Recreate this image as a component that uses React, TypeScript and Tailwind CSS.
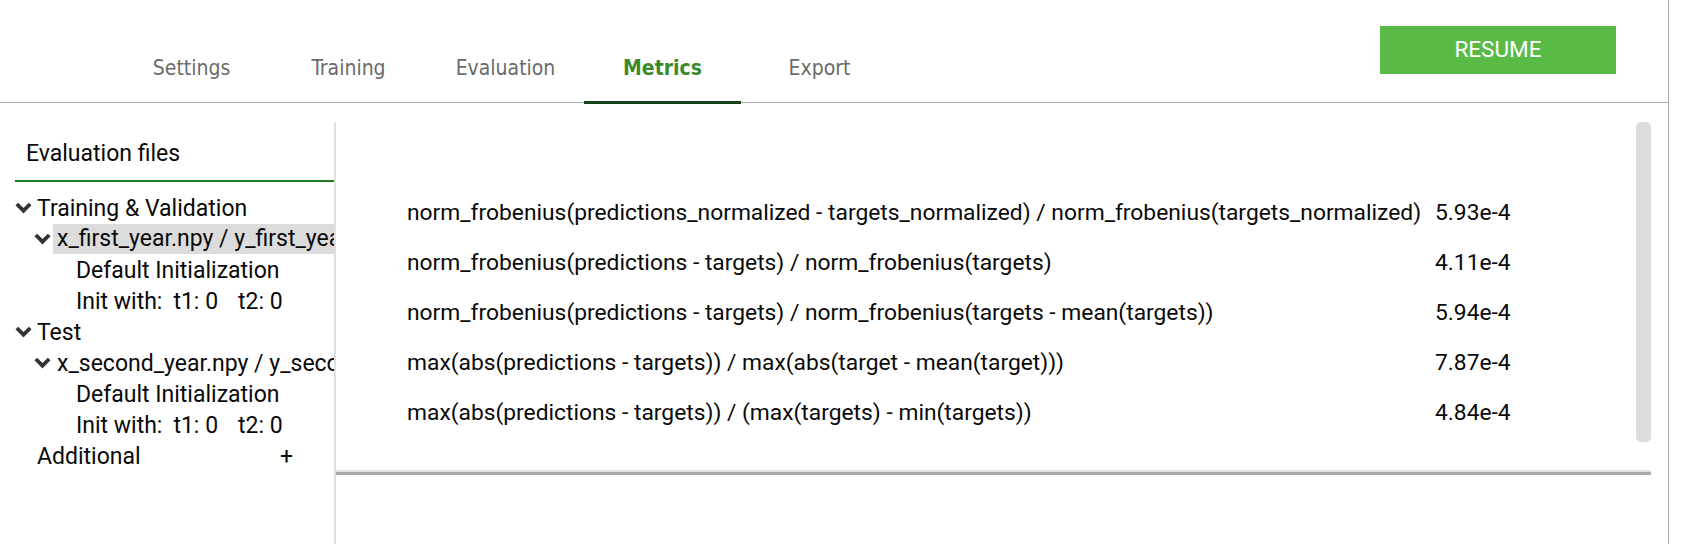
import React from "react";

const Chevron = () => (
  <svg width="17" height="12" viewBox="0 0 17 12" className="shrink-0">
    <polyline points="1.8,2 8.5,8.7 15.2,2" fill="none" stroke="#333333" strokeWidth="3.8" strokeLinecap="butt" strokeLinejoin="miter" />
  </svg>
);

const tabs = ["Settings", "Training", "Evaluation", "Metrics", "Export"];

const metrics: [string, string][] = [
  ["norm_frobenius(predictions_normalized - targets_normalized) / norm_frobenius(targets_normalized)", "5.93e-4"],
  ["norm_frobenius(predictions - targets) / norm_frobenius(targets)", "4.11e-4"],
  ["norm_frobenius(predictions - targets) / norm_frobenius(targets - mean(targets))", "5.94e-4"],
  ["max(abs(predictions - targets)) / max(abs(target - mean(target)))", "7.87e-4"],
  ["max(abs(predictions - targets)) / (max(targets) - min(targets))", "4.84e-4"],
];

const roboto = { fontFamily: "Roboto, 'Liberation Sans', sans-serif" };

function InitRow() {
  return (
    <div className="h-[31px] leading-[31px] pl-[76px] whitespace-nowrap">
      <span>Init with:</span>
      <span className="ml-[11px]">t1: 0</span>
      <span className="ml-[20px]">t2: 0</span>
    </div>
  );
}

export default function App() {
  return (
    <div className="w-[1684px] h-[544px] bg-white overflow-hidden flex text-[#0a0a0a]" style={roboto}>
      <div className="w-[1669px] h-full border-r border-[#aaaaaa] flex flex-col">
        {/* Header */}
        <div className="h-[103px] shrink-0 border-b border-[#aaaaaa] flex">
          <div className="flex pl-[113px] h-full" style={{ fontFamily: "'DejaVu Sans Condensed', 'DejaVu Sans', sans-serif" }}>
            {tabs.map((t) => (
              <div key={t} className="relative w-[157px] h-full flex justify-center pt-[57px]">
                <span
                  className={
                    t === "Metrics"
                      ? "text-[21px] leading-[23px] font-bold text-[#3a8a2c]"
                      : "text-[21px] leading-[23px] text-[#6a6a6a]"
                  }
                >
                  {t}
                </span>
                {t === "Metrics" && (
                  <div className="absolute left-0 right-0 bottom-[-2px] h-[3px] bg-[#17451a]" />
                )}
              </div>
            ))}
          </div>
          <div className="ml-auto mr-[52px] mt-[26px] w-[236px] h-[48px] bg-[#59bb46] text-white flex items-center justify-center text-[22.5px]">
            RESUME
          </div>
        </div>

        {/* Body */}
        <div className="flex-1 flex pt-[19px] min-h-0">
          {/* Left panel */}
          <div className="w-[336px] shrink-0 border-r-2 border-[#e0e0e0] text-[23px] overflow-hidden">
            <div className="ml-[15px] pl-[11px] pt-[16px] pb-[11px] border-b-2 border-[#1e7d24] leading-[31px]">
              Evaluation files
            </div>
            <div className="mt-[10.5px] whitespace-nowrap">
              <div className="h-[31px] leading-[31px] flex items-center pl-[15px]">
                <Chevron />
                <span className="ml-[5px]">Training &amp; Validation</span>
              </div>
              <div className="h-[31px] leading-[31px] flex items-center pl-[34px]">
                <Chevron />
                <span className="ml-[2px] pl-[4px] bg-[#dcdcdc] h-[30px] leading-[30px] flex-1">x_first_year.npy / y_first_year.npy</span>
              </div>
              <div className="h-[31px] leading-[31px] pl-[76px]">Default Initialization</div>
              <InitRow />
              <div className="h-[31px] leading-[31px] flex items-center pl-[15px]">
                <Chevron />
                <span className="ml-[5px]">Test</span>
              </div>
              <div className="h-[31px] leading-[31px] flex items-center pl-[34px]">
                <Chevron />
                <span className="ml-[6px]">x_second_year.npy / y_second_year.npy</span>
              </div>
              <div className="h-[31px] leading-[31px] pl-[76px]">Default Initialization</div>
              <InitRow />
              <div className="h-[31px] leading-[31px] pl-[37px] flex">
                <span className="w-[243px]">Additional</span>
                <span>+</span>
              </div>
            </div>
          </div>

          {/* Right panel */}
          <div className="w-[1315px] shrink-0 flex flex-col">
            <div className="h-[348px] flex">
              <div className="flex-1 pl-[71px] pt-[66px] text-[22.8px]">
                <div className="grid grid-cols-[1028px_auto]">
                  {metrics.map(([k, v]) => (
                    <React.Fragment key={k}>
                      <div className="h-[50px] leading-[50px] whitespace-nowrap">{k}</div>
                      <div className="h-[50px] leading-[50px]">{v}</div>
                    </React.Fragment>
                  ))}
                </div>
              </div>
              <div className="w-[15px] shrink-0">
                <div className="h-[320px] bg-[#dcdcdc] rounded-[5px]" />
              </div>
            </div>
            <div className="h-[2px] bg-[#e2e2e2]" />
            <div className="h-[3px] bg-[#aaaaaa]" />
            <div className="flex-1" />
          </div>
        </div>
      </div>
    </div>
  );
}
